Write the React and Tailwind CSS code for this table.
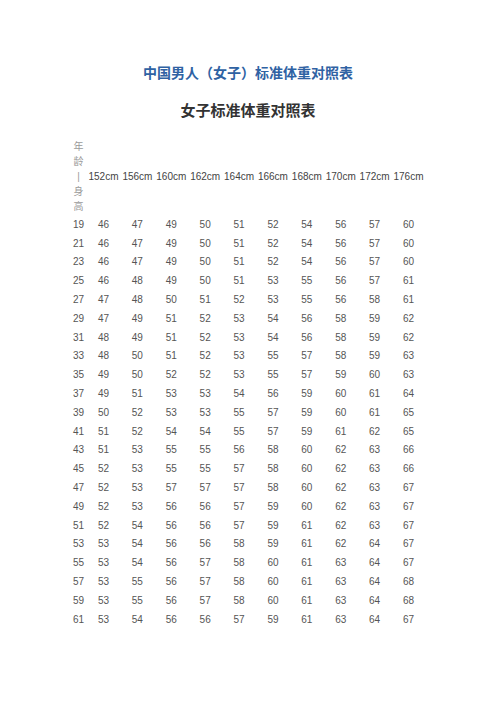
import React from "react";

const rows = [
  [19, 46, 47, 49, 50, 51, 52, 54, 56, 57, 60],
  [21, 46, 47, 49, 50, 51, 52, 54, 56, 57, 60],
  [23, 46, 47, 49, 50, 51, 52, 54, 56, 57, 60],
  [25, 46, 48, 49, 50, 51, 53, 55, 56, 57, 61],
  [27, 47, 48, 50, 51, 52, 53, 55, 56, 58, 61],
  [29, 47, 49, 51, 52, 53, 54, 56, 58, 59, 62],
  [31, 48, 49, 51, 52, 53, 54, 56, 58, 59, 62],
  [33, 48, 50, 51, 52, 53, 55, 57, 58, 59, 63],
  [35, 49, 50, 52, 52, 53, 55, 57, 59, 60, 63],
  [37, 49, 51, 53, 53, 54, 56, 59, 60, 61, 64],
  [39, 50, 52, 53, 53, 55, 57, 59, 60, 61, 65],
  [41, 51, 52, 54, 54, 55, 57, 59, 61, 62, 65],
  [43, 51, 53, 55, 55, 56, 58, 60, 62, 63, 66],
  [45, 52, 53, 55, 55, 57, 58, 60, 62, 63, 66],
  [47, 52, 53, 57, 57, 57, 58, 60, 62, 63, 67],
  [49, 52, 53, 56, 56, 57, 59, 60, 62, 63, 67],
  [51, 52, 54, 56, 56, 57, 59, 61, 62, 63, 67],
  [53, 53, 54, 56, 56, 58, 59, 61, 62, 64, 67],
  [55, 53, 54, 56, 57, 58, 60, 61, 63, 64, 67],
  [57, 53, 55, 56, 57, 58, 60, 61, 63, 64, 68],
  [59, 53, 55, 56, 57, 58, 60, 61, 63, 64, 68],
  [61, 53, 54, 56, 56, 57, 59, 61, 63, 64, 67],
];

const heights = ["152cm", "156cm", "160cm", "162cm", "164cm", "166cm", "168cm", "170cm", "172cm", "176cm"];

export default function App() {
  return (
    <div
      className="w-[496px] min-h-[702px] bg-white flex flex-col items-center pt-[63px]"
      style={{ fontFamily: '"Liberation Sans", "Noto Sans CJK SC", sans-serif' }}
    >
      <h1 className="text-[14px] leading-[20px] font-bold text-[#2f62a3]">
        中国男人（女子）标准体重对照表
      </h1>
      <h2 className="mt-[17px] text-[15px] leading-[22px] font-bold text-[#333333]">
        女子标准体重对照表
      </h2>
      <div className="mt-[16px] grid grid-cols-[16px_repeat(10,33.9px)]">
        <div className="flex flex-col items-center py-[1px] text-[10px] leading-[15px] text-[#9a9a9a]">
          <span>年</span>
          <span>龄</span>
          <span>|</span>
          <span>身</span>
          <span>高</span>
        </div>
        {heights.map((h) => (
          <div key={h} className="flex items-center justify-center text-[10px] text-[#444444] whitespace-nowrap">
            {h}
          </div>
        ))}
        {rows.map((r) =>
          r.map((v, i) => (
            <div
              key={r[0] + "-" + i}
              className="h-[18.8px] flex items-center justify-center text-[10px] text-[#555555]"
            >
              {v}
            </div>
          ))
        )}
      </div>
    </div>
  );
}
